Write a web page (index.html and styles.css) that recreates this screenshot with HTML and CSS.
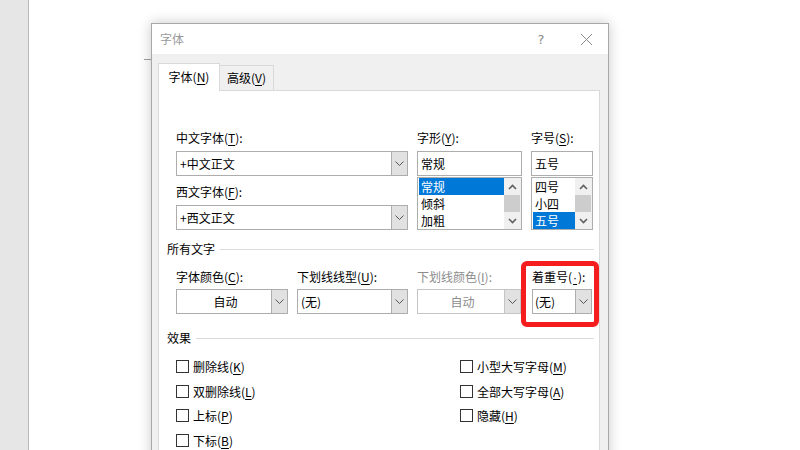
FILE: index.html
```html
<!DOCTYPE html>
<html lang="zh-CN">
<head>
<meta charset="utf-8">
<title>字体</title>
<link rel="stylesheet" href="styles.css">
</head>
<body>
<div class="app">
  <div class="side"></div>
  <div class="page"></div>
  <div class="corner"></div>
  <div class="dialog">
    <div class="titlebar">
      <span class="title">字体</span>
      <span class="help">?</span>
      <svg class="close" width="13" height="13" viewBox="0 0 13 13"><path d="M1 1L12 12M12 1L1 12" stroke="#8a8a8a" stroke-width="1" fill="none"/></svg>
    </div>
    <div class="dbody">
      <div class="tabs">
        <div class="tab active">字体(<u>N</u>)</div>
        <div class="tab">高级(<u>V</u>)</div>
      </div>
      <div class="panel">
        <div class="fontgrid">
          <div class="col c1">
            <div class="lbl">中文字体(<u>T</u>):</div>
            <div class="combo"><span class="val">+中文正文</span><span class="btn"><svg width="9" height="5" viewBox="0 0 9 5"><path d="M0.5 0.5L4.5 4.5L8.5 0.5" stroke="#555" fill="none"/></svg></span></div>
            <div class="lbl l2">西文字体(<u>F</u>):</div>
            <div class="combo"><span class="val">+西文正文</span><span class="btn"><svg width="9" height="5" viewBox="0 0 9 5"><path d="M0.5 0.5L4.5 4.5L8.5 0.5" stroke="#555" fill="none"/></svg></span></div>
          </div>
          <div class="col c2">
            <div class="lbl">字形(<u>Y</u>):</div>
            <div class="input">常规</div>
            <div class="list">
              <div class="items">
                <div class="item sel">常规</div>
                <div class="item">倾斜</div>
                <div class="item">加粗</div>
              </div>
              <div class="sb">
                <span class="arr"><svg width="9" height="6" viewBox="0 0 9 6"><path d="M1 5L4.5 1.5L8 5" stroke="#606060" stroke-width="1.6" fill="none"/></svg></span>
                <span class="thumb"></span>
                <span class="arr"><svg width="9" height="6" viewBox="0 0 9 6"><path d="M1 1L4.5 4.5L8 1" stroke="#606060" stroke-width="1.6" fill="none"/></svg></span>
              </div>
            </div>
          </div>
          <div class="col c3">
            <div class="lbl">字号(<u>S</u>):</div>
            <div class="input">五号</div>
            <div class="list">
              <div class="items">
                <div class="item">四号</div>
                <div class="item">小四</div>
                <div class="item sel">五号</div>
              </div>
              <div class="sb">
                <span class="arr"><svg width="9" height="6" viewBox="0 0 9 6"><path d="M1 5L4.5 1.5L8 5" stroke="#606060" stroke-width="1.6" fill="none"/></svg></span>
                <span class="thumb"></span>
                <span class="arr"><svg width="9" height="6" viewBox="0 0 9 6"><path d="M1 1L4.5 4.5L8 1" stroke="#606060" stroke-width="1.6" fill="none"/></svg></span>
              </div>
            </div>
          </div>
        </div>

        <div class="group g1"><span>所有文字</span><i class="rule"></i></div>

        <div class="row4">
          <div class="fld fa">
            <div class="lbl">字体颜色(<u>C</u>):</div>
            <div class="combo"><span class="val center">自动</span><span class="btn"><svg width="9" height="5" viewBox="0 0 9 5"><path d="M0.5 0.5L4.5 4.5L8.5 0.5" stroke="#555" fill="none"/></svg></span></div>
          </div>
          <div class="fld fb">
            <div class="lbl">下划线线型(<u>U</u>):</div>
            <div class="combo"><span class="val">(无)</span><span class="btn"><svg width="9" height="5" viewBox="0 0 9 5"><path d="M0.5 0.5L4.5 4.5L8.5 0.5" stroke="#555" fill="none"/></svg></span></div>
          </div>
          <div class="fld fc disabled">
            <div class="lbl">下划线颜色(<u>I</u>):</div>
            <div class="combo"><span class="val center">自动</span><span class="btn"><svg width="9" height="5" viewBox="0 0 9 5"><path d="M0.5 0.5L4.5 4.5L8.5 0.5" stroke="#555" fill="none"/></svg></span></div>
          </div>
          <div class="fld fd">
            <div class="lbl">着重号(<u class="dot">·</u>):</div>
            <div class="combo"><span class="val">(无)</span><span class="btn"><svg width="9" height="5" viewBox="0 0 9 5"><path d="M0.5 0.5L4.5 4.5L8.5 0.5" stroke="#555" fill="none"/></svg></span></div>
          </div>
        </div>

        <div class="group g2"><span>效果</span><i class="rule"></i></div>

        <div class="effects">
          <div class="chk"><span class="box"></span>删除线(<u>K</u>)</div>
          <div class="chk"><span class="box"></span>小型大写字母(<u>M</u>)</div>
          <div class="chk"><span class="box"></span>双删除线(<u>L</u>)</div>
          <div class="chk"><span class="box"></span>全部大写字母(<u>A</u>)</div>
          <div class="chk"><span class="box"></span>上标(<u>P</u>)</div>
          <div class="chk"><span class="box"></span>隐藏(<u>H</u>)</div>
          <div class="chk"><span class="box"></span>下标(<u>B</u>)</div>
        </div>

        <div class="highlight"></div>
      </div>
    </div>
  </div>
</div>
</body>
</html>
```

FILE: styles.css
```css
* { box-sizing: border-box; }
html, body {
  margin: 0;
  padding: 0;
  width: 800px;
  height: 450px;
  overflow: hidden;
  background: #fff;
  font-family: "Noto Sans CJK SC", "Microsoft YaHei", sans-serif;
  font-size: 12px;
  color: #000;
}
u { text-decoration: underline; text-underline-offset: 2px; }
u.dot { font-family: "Liberation Sans", sans-serif; padding: 0 1px; }

.app {
  position: relative;
  width: 800px;
  height: 450px;
  display: flex;
}
.side {
  width: 29px;
  height: 450px;
  background: #e6e6e6;
  border-right: 1px solid #b8b8b8;
}
.page { flex: 1; background: #fff; }
.corner {
  position: absolute;
  left: 144px;
  top: 59px;
  width: 8px;
  height: 1px;
  background: #a0a0a0;
}

.dialog {
  position: absolute;
  left: 151px;
  top: 23px;
  width: 458px;
  height: 440px;
  border: 1px solid #a8a8a8;
  background: #f0f0f0;
  box-shadow: 0 0 12px rgba(0,0,0,0.22);
  display: flex;
  flex-direction: column;
}

.titlebar {
  height: 30px;
  background: #fff;
  display: flex;
  align-items: center;
  padding: 0 15px 0 8px;
}
.title { flex: 1; color: #999; font-size: 12px; line-height: 30px; }
.help {
  width: 12px;
  text-align: center;
  color: #8a8a8a;
  font-family: "DejaVu Sans", sans-serif;
  font-size: 13px;
  margin-right: 33px;
}
.close { display: block; }

.dbody {
  flex: 1;
  padding: 9px 8px 0 6px;
  display: flex;
  flex-direction: column;
}
.tabs {
  display: flex;
  align-items: flex-end;
  height: 27px;
  position: relative;
  z-index: 2;
}
.tab {
  border: 1px solid #d9d9d9;
  text-align: center;
  background: #f0f0f0;
  height: 25px;
  line-height: 23px;
  width: 55px;
  margin-left: -1px;
  border-bottom: none;
}
.tab.active {
  margin-left: 0;
  width: 62px;
  height: 28px;
  line-height: 26px;
  background: #fff;
  margin-bottom: -1px;
}
.panel {
  position: relative;
  flex: 1;
  background: #fff;
  border: 1px solid #d9d9d9;
  padding: 39px 5px 0 17px;
}

.lbl { height: 16px; line-height: 16px; white-space: nowrap; }

.fontgrid { display: flex; gap: 9px; }
.col { display: flex; flex-direction: column; }
.c1 { width: 232px; }
.c2 { width: 105px; }
.c3 { width: 62px; }
.col .lbl { margin-bottom: 5px; }
.col .l2 { margin-top: 8px; }

.combo {
  height: 25px;
  border: 1px solid #adadad;
  background: #fff;
  display: flex;
}
.val {
  flex: 1;
  padding-left: 3px;
  line-height: 23px;
  white-space: nowrap;
}
.val.center { text-align: center; }
.btn {
  width: 16px;
  background: #e1e1e1;
  border-left: 1px solid #adadad;
  display: flex;
  align-items: center;
  justify-content: center;
}
.btn svg { display: block; }

.input {
  height: 25px;
  border: 1px solid #adadad;
  padding-left: 3px;
  line-height: 23px;
}
.list {
  margin-top: 1px;
  height: 53px;
  border: 1px solid #adadad;
  display: flex;
}
.items { flex: 1; padding-left: 1px; }
.item { height: 17px; line-height: 17px; padding-left: 2px; }
.item.sel { background: #0078d7; color: #fff; }
.sb {
  width: 17px;
  background: #f0f0f0;
  display: flex;
  flex-direction: column;
}
.arr {
  height: 17px;
  display: flex;
  align-items: center;
  justify-content: center;
}
.arr svg { display: block; }
.thumb { height: 17px; background: #cdcdcd; margin: 0 1px 0 0; }

.group {
  display: flex;
  align-items: center;
  gap: 5px;
  margin-left: -9px;
  height: 16px;
  line-height: 16px;
}
.group .rule { flex: 1; height: 1px; background: #dcdcdc; }
.g1 { margin-top: 11px; }
.g2 { margin-top: 16px; }

.row4 { display: flex; margin-top: 12px; }
.fld .lbl { margin-bottom: 4px; }
.fa { width: 112px; }
.fb { width: 111px; margin-left: 9px; }
.fc { width: 104px; margin-left: 9px; }
.fd { width: 60px; margin-left: 11px; }
.fd .combo .val { padding-left: 2px; }
.disabled .lbl { color: #8c8c8c; }
.disabled .val { color: #8c8c8c; }
.disabled .combo { border-color: #c4c4c4; }
.disabled .btn { border-left-color: #c4c4c4; }

.effects {
  margin-top: 8px;
  display: grid;
  grid-template-columns: 284px auto;
  grid-auto-rows: 24.7px;
}
.chk { display: flex; align-items: center; white-space: nowrap; }
.box {
  width: 13px;
  height: 13px;
  border: 1px solid #333;
  background: #fff;
  margin-right: 4px;
  flex: none;
}

.highlight {
  position: absolute;
  left: 362px;
  top: 170px;
  width: 78px;
  height: 66px;
  border: 5px solid #f51d1d;
  border-radius: 6px;
  pointer-events: none;
}
```
